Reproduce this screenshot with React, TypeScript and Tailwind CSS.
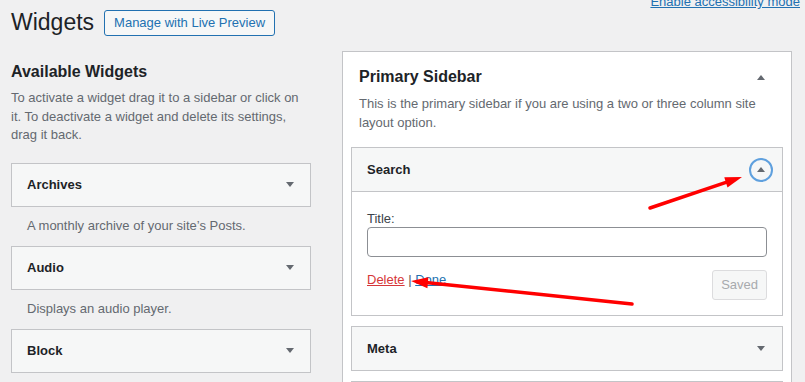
import React from "react";

function Caret({ up = false }: { up?: boolean }) {
  return (
    <svg width="8" height="5" viewBox="0 0 8 5" className="block">
      {up ? <polygon points="0,5 8,5 4,0" fill="#646970" /> : <polygon points="0,0 8,0 4,5" fill="#646970" />}
    </svg>
  );
}

const available = [
  { title: "Archives", desc: "A monthly archive of your site’s Posts." },
  { title: "Audio", desc: "Displays an audio player." },
  { title: "Block", desc: "" },
];

export default function App() {
  return (
    <div className="relative h-screen overflow-hidden bg-[#f0f0f1] font-['Liberation_Sans',Arial,sans-serif] text-[13px] text-[#3c434a]">
      {/* Header */}
      <div className="flex items-start pl-[11px] pr-[5px] pt-[8px]">
        <div className="flex items-center gap-[10px]">
          <h1 className="text-[23px] leading-[29px] text-[#1d2327]">Widgets</h1>
          <a className="flex h-[26px] w-[171px] items-center justify-center rounded-[3px] border border-[#2271b1] bg-[#f6f7f7] font-medium text-[#2271b1]">
            Manage with Live Preview
          </a>
        </div>
        <a className="ml-auto -mt-[15px] leading-[18px] text-[#2271b1] underline">Enable accessibility mode</a>
      </div>

      {/* Columns */}
      <div className="flex items-start pl-[11px]">
        {/* Available widgets */}
        <div className="w-[300px] pt-[25px]">
          <h2 className="text-[16px] font-bold leading-[20px] text-[#1d2327]">Available Widgets</h2>
          <p className="mt-[7px] leading-[18.5px] text-[#646970]">
            To activate a widget drag it to a sidebar or click on it. To deactivate a widget and delete its settings, drag it back.
          </p>
          <div className="mt-[18px]">
            {available.map((w) => (
              <div key={w.title}>
                <div className="flex h-[44px] items-center justify-between border border-[#c3c4c7] bg-[#f6f7f7] pl-[15px] pr-[16px]">
                  <span className="font-semibold text-[#1d2327]">{w.title}</span>
                  <Caret />
                </div>
                {w.desc && <div className="flex h-[39px] items-center pl-[16px] text-[#646970]">{w.desc}</div>}
              </div>
            ))}
          </div>
        </div>

        {/* Primary sidebar */}
        <div className="ml-[31px] mt-[14px] w-[450px] border border-[#c3c4c7] bg-white pb-[20px] pt-[15px]">
          <div className="flex items-center justify-between pl-[16px] pr-[26px]">
            <h2 className="text-[16px] font-bold leading-[20px] text-[#1d2327]">Primary Sidebar</h2>
            <Caret up />
          </div>
          <p className="mt-[6.5px] px-[16px] leading-[19px] text-[#646970]">
            This is the primary sidebar if you are using a two or three column site layout option.
          </p>

          <div className="mx-[8px] mt-[15.5px] space-y-[10px]">
            {/* Search (open) */}
            <div className="border border-[#c3c4c7] bg-white">
              <div className="flex h-[44px] items-center justify-between border-b border-[#c3c4c7] bg-[#f6f7f7] pl-[15px] pr-[9px]">
                <span className="font-semibold text-[#1d2327]">Search</span>
                <span className="flex h-[24px] w-[24px] items-center justify-center rounded-full border-2 border-[#5fa0de]">
                  <Caret up />
                </span>
              </div>
              <div className="px-[15px] pb-[15px] pt-[18px]">
                <label className="block leading-[17px] text-[#3c434a]">Title:</label>
                <div className="h-[30px] w-full rounded-[4px] border border-[#8c8f94] bg-white" />
                <div className="mt-[13px] flex items-start justify-between">
                  <div className="leading-[20px]">
                    <a className="text-[#d63638] underline">Delete</a>
                    <span className="text-[#50575e]"> | </span>
                    <a className="text-[#2271b1] underline">Done</a>
                  </div>
                  <button className="h-[30px] rounded-[3px] border border-[#dcdcde] bg-[#f6f7f7] px-[8px] text-[#a7aaad]">
                    Saved
                  </button>
                </div>
              </div>
            </div>

            {/* Meta */}
            <div className="flex h-[45px] items-center justify-between border border-[#c3c4c7] bg-[#f6f7f7] pl-[15px] pr-[17px]">
              <span className="font-semibold text-[#1d2327]">Meta</span>
              <Caret />
            </div>
            <div className="h-[45px] border border-[#c3c4c7] bg-[#f6f7f7]" />
          </div>
        </div>
      </div>

      {/* Annotation arrows */}
      <svg className="pointer-events-none absolute left-0 top-0" width="805" height="382" viewBox="0 0 805 382">
        <line x1="650" y1="208" x2="726" y2="182.4" stroke="#ff0000" strokeWidth="3.5" strokeLinecap="round" />
        <polygon points="742,177 727.5,187.6 724.3,177.2" fill="#ff0000" />
        <line x1="632" y1="304" x2="428" y2="282.8" stroke="#ff0000" strokeWidth="3.5" strokeLinecap="round" />
        <polygon points="411,281 428.4,277.3 427.4,288.3" fill="#ff0000" />
      </svg>
    </div>
  );
}
